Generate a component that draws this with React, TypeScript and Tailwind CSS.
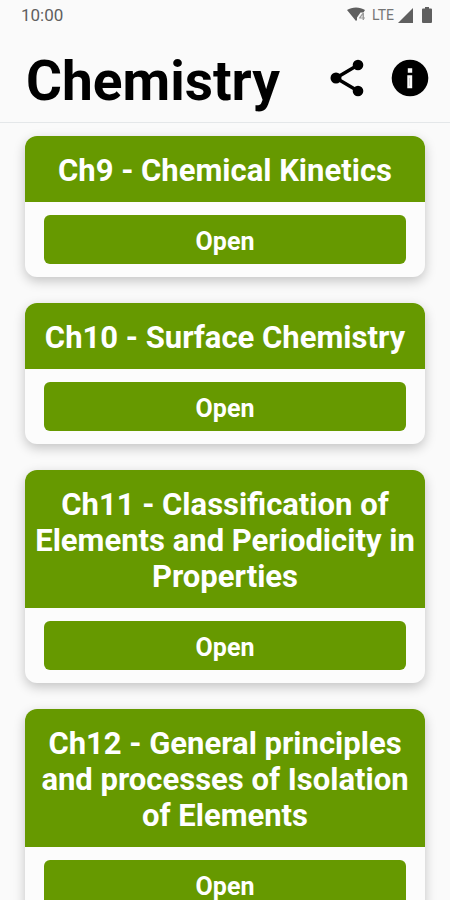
const chapters = [
    "Ch9 - Chemical Kinetics",
    "Ch10 - Surface Chemistry",
    "Ch11 - Classification of Elements and Periodicity in Properties",
    "Ch12 - General principles and processes of Isolation of Elements",
];

function StatusBar() {
    return (
        <div className="flex h-8 items-center justify-between pr-[18px] pb-[2px] pl-[21px] text-[#5f5f5f]">
            <span className="text-[17px] leading-5">10:00</span>
            <div className="flex items-center">
                <svg className="h-4 w-5" viewBox="0 0 20 16" fill="currentColor" aria-hidden="true">
                    <path d="M0 3C5 -.5 13 -.5 18 3l-1.500 2.500h-3L10 10.500V13L9 14z" />
                    <path d="M15.500 6h1.500v4.500h1v1h-1V13h-1.400v-1.500h-3.500v-1zM15.500 8.100 13.800 10.500h1.700z" fillRule="evenodd" opacity=".6" />
                </svg>
                <span className="ml-[5px] text-[14px] leading-5 text-[#757575]">LTE</span>
                <svg className="ml-1 h-4 w-[15px]" viewBox="0 0 15 16" fill="currentColor" aria-hidden="true">
                    <path d="M15 1v15H0z" />
                </svg>
                <svg className="ml-[9px] h-4 w-[10px]" viewBox="0 0 10 16" fill="currentColor" aria-hidden="true">
                    <path d="M3 0h4v1.500h2q1 0 1 1V15q0 1-1 1H1q-1 0-1-1V2.500q0-1 1-1h2z" />
                </svg>
            </div>
        </div>
    );
}

function Header() {
    return (
        <header className="flex h-[91px] items-center justify-between border-b border-[#e4e7e9] pt-[2px] pr-[21px] pl-[26px]">
            <h1 className="pt-[6px] text-[55px] leading-[64px] font-bold text-black">Chemistry</h1>
            <div className="flex items-center gap-[26px]">
                <button type="button" aria-label="Share" className="text-black">
                    <svg className="h-[38px] w-9" viewBox="0 0 36 38" fill="currentColor" aria-hidden="true">
                        <path d="M29 6 7 19l22 13" fill="none" stroke="currentColor" strokeWidth="3.500" />
                        <circle cx="29" cy="6" r="5.300" />
                        <circle cx="7" cy="19" r="5.500" />
                        <circle cx="29" cy="32" r="5.300" />
                    </svg>
                </button>
                <button type="button" aria-label="Information" className="text-black">
                    <svg className="h-[38px] w-[38px]" viewBox="0 0 38 38" aria-hidden="true">
                        <circle cx="19" cy="19" r="18.300" fill="currentColor" />
                        <path d="M16.800 9.300h4.400v4.400h-4.400zM16.300 16.300h4.900v12.900h-4.900z" fill="#fafafa" />
                        <path d="M18.300 19v8" stroke="currentColor" strokeWidth=".5" opacity=".4" />
                    </svg>
                </button>
            </div>
        </header>
    );
}

function ChapterCard({ title }: { title: string }) {
    return (
        <article className="overflow-hidden rounded-xl bg-[#fcfcfc] shadow-[0_4px_12px_rgba(0,0,0,0.22)]">
            <h2 className="bg-[#669900] px-2 pt-[17px] pb-[13px] text-center text-[31px] leading-9 font-bold text-white">{title}</h2>
            <div className="px-[19px] py-[13px]">
                <button type="button" className="h-[49px] w-full rounded-md bg-[#669900] pt-[5px] text-[25px] leading-8 font-bold text-white">
                    Open
                </button>
            </div>
        </article>
    );
}

export default function App() {
    return (
        <div className="flex h-screen flex-col bg-[#fafafa] font-['Roboto',sans-serif]">
            <StatusBar />
            <Header />
            <main className="flex min-h-0 flex-1 flex-col overflow-y-auto px-[25px] pt-[13px] [scrollbar-width:none]">
                <div className="flex flex-col gap-[26px] pb-6">
                    {chapters.map((title) => (
                        <ChapterCard key={title} title={title} />
                    ))}
                </div>
            </main>
        </div>
    );
}
